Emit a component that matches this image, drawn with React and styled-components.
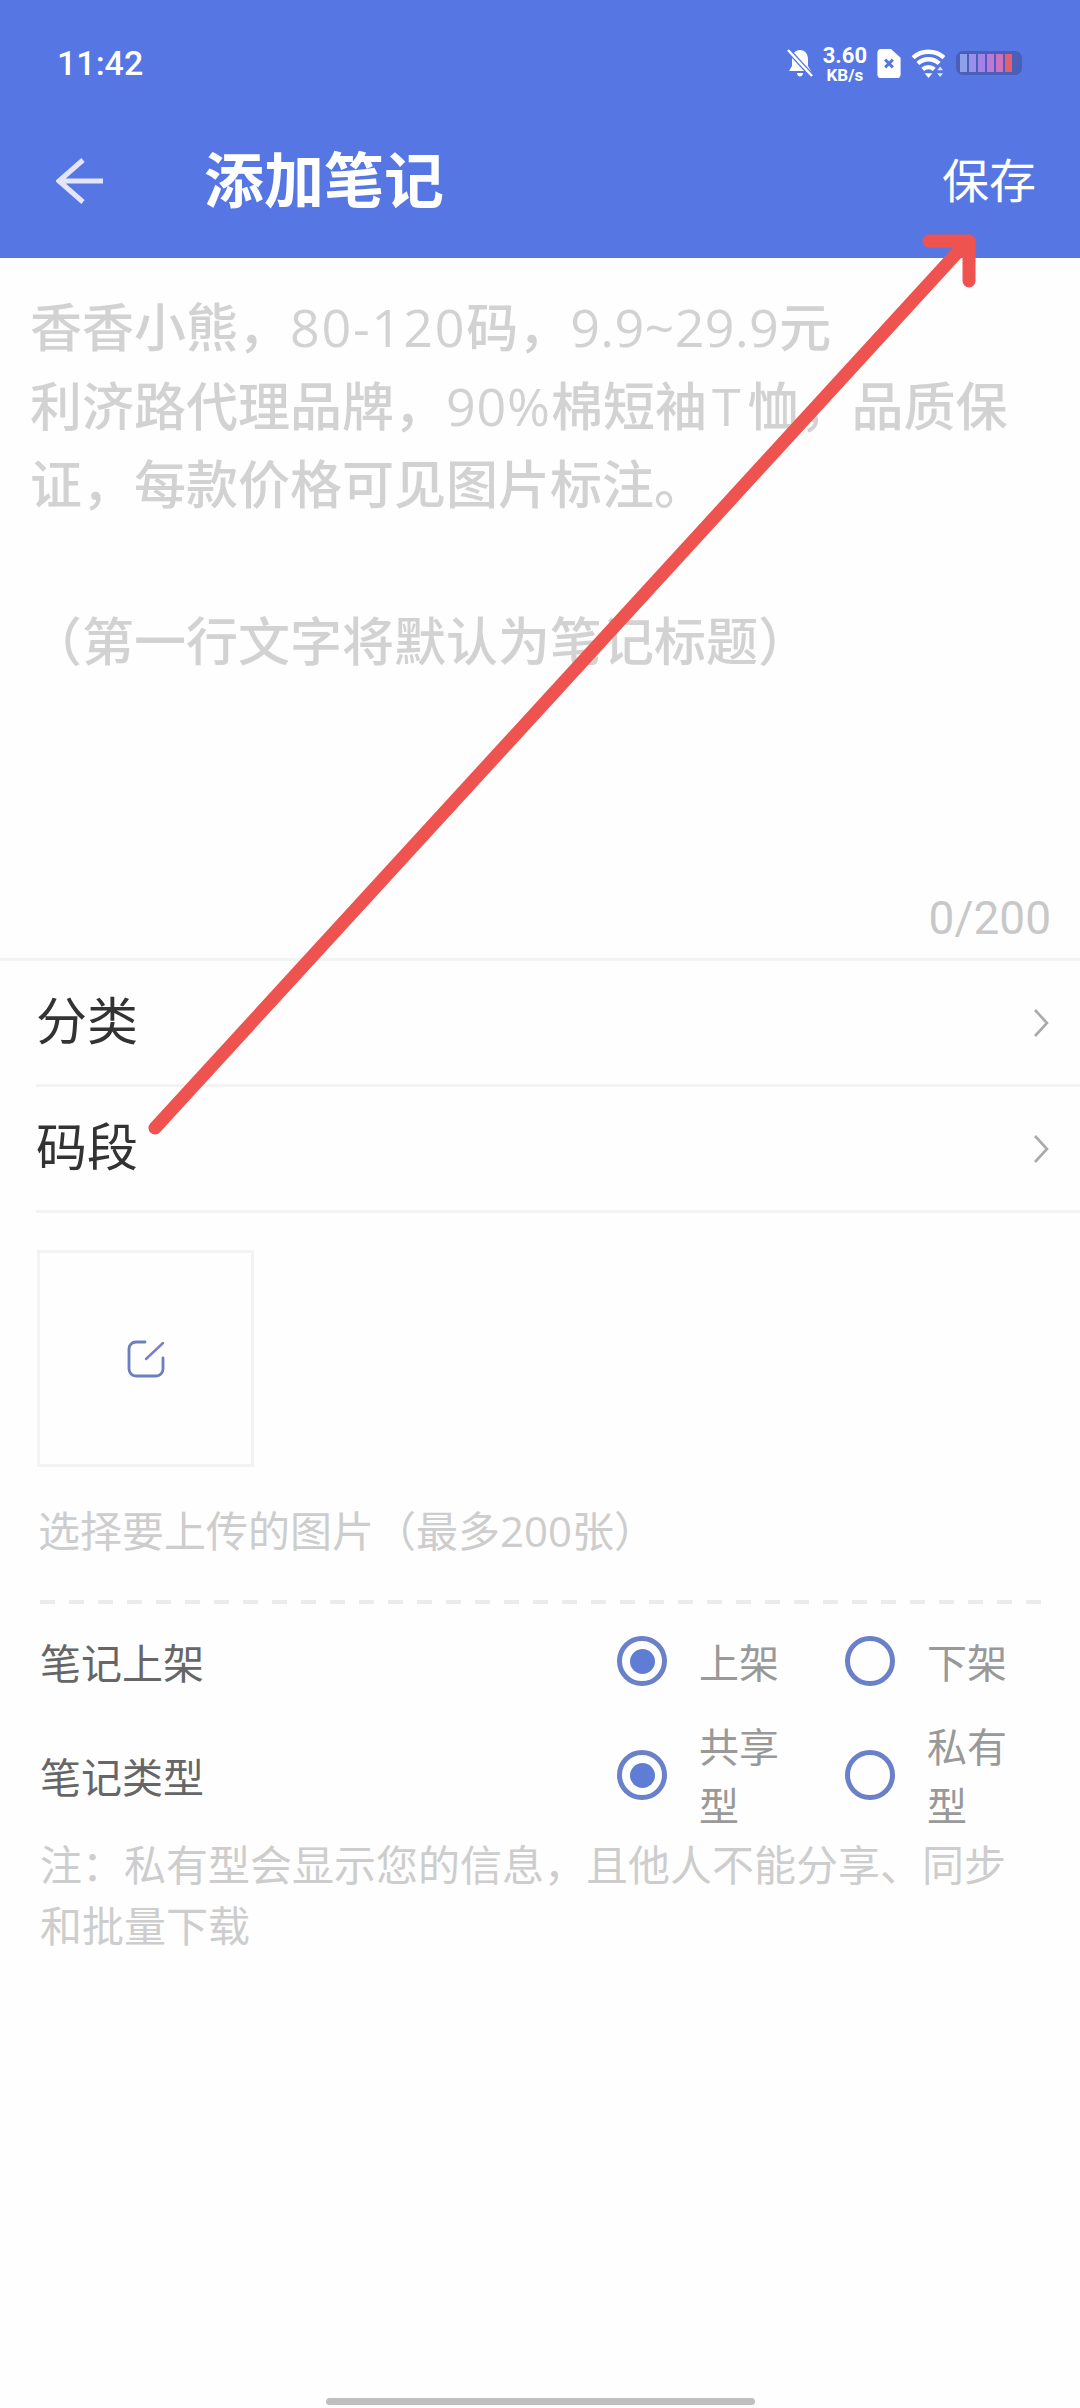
import React from 'react';
import styled, { createGlobalStyle } from 'styled-components';

const FONT = `"Noto Sans CJK SC", "Noto Sans", sans-serif`;
const TEXT_FONT = `"Open Sans", "Noto Sans CJK SC", sans-serif`;

const GlobalStyle = createGlobalStyle`
  html, body {
    margin: 0;
    padding: 0;
    background: #fefefe;
  }
  * {
    box-sizing: border-box;
  }
`;

const App = () => {
  return (
    <Page>
      <GlobalStyle />
      <Header>
        <StatusBar>
          <Time>11:42</Time>
          <StatusIcons>
            <svg width="26" height="30" viewBox="0 0 26 30">
              <path d="M13 2c-5 0-8 4-8 9v7l-3 5h22l-3-5v-7c0-5-3-9-8-9zM10 25c0 2 1.500 3.500 3 3.500s3-1.500 3-3.500z" fill="#fff" />
              <path d="M1 2l24 26" stroke="#5677e3" strokeWidth="5" />
              <path d="M1 2l24 26" stroke="#fff" strokeWidth="2.500" />
            </svg>
            <Speed>
              <SpeedValue>3.60</SpeedValue>
              <SpeedUnit>KB/s</SpeedUnit>
            </Speed>
            <svg width="24" height="29" viewBox="0 0 24 30">
              <path d="M4 0h10l10 9v17a4 4 0 0 1-4 4H4a4 4 0 0 1-4-4V4a4 4 0 0 1 4-4z" fill="#fff" />
              <path d="M8 11l8 8M16 11l-8 8" stroke="#5677e3" strokeWidth="3" />
            </svg>
            <svg width="35" height="29" viewBox="0 0 36 30">
              <path d="M2 9a24 24 0 0 1 32 0M7 15a16 16 0 0 1 22 0M12 21a9 9 0 0 1 12 0" stroke="#fff" strokeWidth="4.500" fill="none" />
              <path d="M14 25h8l-4 5z" fill="#fff" />
              <path d="M30 18l3 4h-6zM30 29l3-4h-6z" fill="#dfe6fb" />
            </svg>
            <Battery>
              {['#8f9fe8', '#9a8fec', '#a583e6', '#c078d8', '#d070c0', '#e4606f'].map((c) => (
                <BatteryCell key={c} $color={c} />
              ))}
            </Battery>
          </StatusIcons>
        </StatusBar>
        <TitleBar>
          <BackButton>
            <svg width="48" height="46" viewBox="0 0 48 46">
              <path d="M27 2L3 23l24 21M3 23h44" stroke="#e3e6f8" strokeWidth="5" fill="none" />
            </svg>
          </BackButton>
          <Title>添加笔记</Title>
          <SaveButton>保存</SaveButton>
        </TitleBar>
      </Header>

      <NoteArea>
        <Placeholder>
          香香小熊，<Latin $spacing="1.8px">80-120</Latin>码，<Latin $spacing="0.4px">9.9~29.9</Latin>元
          <br />
          利济路代理品牌，<Latin $spacing="0.8px">90%</Latin>棉短袖<Latin $lead="5px" $spacing="7px">T</Latin>恤，品质保
          <br />
          证，每款价格可见图片标注。
          <br />
          <br />
          （第一行文字将默认为笔记标题）
        </Placeholder>
        <Counter>0/200</Counter>
      </NoteArea>

      <MenuRow $first>
        <MenuLabel>分类</MenuLabel>
        <Chevron />
      </MenuRow>
      <MenuRow>
        <MenuLabel>码段</MenuLabel>
        <Chevron />
      </MenuRow>

      <UploadSection>
        <UploadBox>
          <svg width="38" height="38" viewBox="0 0 38 38" fill="none">
            <path d="M18 2H9a7 7 0 0 0-7 7v20a7 7 0 0 0 7 7h20a7 7 0 0 0 7-7v-11" stroke="#6a7fbd" strokeWidth="2.800" strokeLinecap="round" />
            <path d="M19 19L36 3" stroke="#7a80c8" strokeWidth="2.500" strokeLinecap="round" />
          </svg>
        </UploadBox>
        <Hint>选择要上传的图片（最多200张）</Hint>
      </UploadSection>

      <DashedLine />

      <OptionRow>
        <OptionLabel>笔记上架</OptionLabel>
        <RadioGroup>
          <Radio $checked />
          <RadioText>上架</RadioText>
        </RadioGroup>
        <RadioGroup>
          <Radio />
          <RadioText>下架</RadioText>
        </RadioGroup>
      </OptionRow>
      <OptionRow $tall>
        <OptionLabel>笔记类型</OptionLabel>
        <RadioGroup>
          <Radio $checked />
          <RadioText>共享型</RadioText>
        </RadioGroup>
        <RadioGroup>
          <Radio />
          <RadioText>私有型</RadioText>
        </RadioGroup>
      </OptionRow>
      <Note>注：私有型会显示您的信息，且他人不能分享、同步和批量下载</Note>

      <HomeBar />

      <ArrowMark width="1080" height="2408" viewBox="0 0 1080 2408" fill="none">
        <path d="M155 1128L966 243" stroke="#ef5350" strokeWidth="13" strokeLinecap="round" />
        <path d="M929 241L969 241L969 281" stroke="#ef5350" strokeWidth="13" strokeLinecap="round" strokeLinejoin="round" />
      </ArrowMark>
    </Page>
  );
};

export default App;

const Chevron = () => (
  <svg width="16" height="28" viewBox="0 0 16 28" fill="none">
    <path d="M2 1l12 13L2 27" stroke="#aaaaaa" strokeWidth="2.600" />
  </svg>
);

const Page = styled.div`
  position: relative;
  display: flex;
  flex-direction: column;
  width: 1080px;
  height: 2408px;
  overflow: hidden;
  background: #fefefe;
  font-family: ${FONT};
`;

const Header = styled.header`
  height: 258px;
  background: #5677e3;
  color: #fff;
`;

const StatusBar = styled.div`
  display: flex;
  align-items: center;
  justify-content: space-between;
  height: 126px;
  padding: 0 58px 0 57px;
`;

const Time = styled.span`
  font-family: Roboto, sans-serif;
  font-size: 34px;
  font-weight: 500;
`;

const StatusIcons = styled.div`
  display: flex;
  align-items: center;
  gap: 10px;
`;

const Speed = styled.div`
  display: flex;
  flex-direction: column;
  align-items: center;
  margin-top: 3px;
  font-family: Roboto, sans-serif;
  font-weight: 700;
  line-height: 1;
`;

const SpeedValue = styled.span`
  font-size: 22px;
`;

const SpeedUnit = styled.span`
  font-size: 17px;
`;

const Battery = styled.div`
  display: flex;
  align-items: center;
  gap: 2px;
  width: 66px;
  height: 24px;
  padding: 3px 4px;
  border-radius: 7px;
  background: #4a5fb8;
  filter: blur(0.7px);
`;

const BatteryCell = styled.span`
  width: 7px;
  height: 100%;
  background: ${(p) => p.$color};
`;

const TitleBar = styled.div`
  display: flex;
  align-items: center;
  height: 110px;
  padding: 0 44px 0 56px;
`;

const BackButton = styled.div`
  display: flex;
  width: 148px;
`;

const Title = styled.h1`
  flex: 1;
  margin: 0;
  padding-bottom: 8px;
  font-size: 60px;
  font-weight: 700;
  line-height: 1;
`;

const SaveButton = styled.span`
  padding-bottom: 8px;
  font-size: 47px;
  line-height: 1;
`;

const NoteArea = styled.div`
  display: flex;
  flex-direction: column;
  height: 700px;
  padding: 30px 29px 0 30px;
`;

const Placeholder = styled.div`
  flex: 1;
  font-family: ${TEXT_FONT};
  font-size: 52px;
  font-weight: 500;
  line-height: 78.500px;
  color: #d2d2d2;
`;

const Latin = styled.span`
  margin-left: ${(p) => p.$lead || 0};
  letter-spacing: ${(p) => p.$spacing};
`;

const Counter = styled.div`
  align-self: flex-end;
  height: 65px;
  font-family: Roboto, sans-serif;
  font-size: 46px;
  line-height: 50px;
  color: #c8c8c8;
`;

const MenuRow = styled.div`
  display: flex;
  align-items: center;
  justify-content: space-between;
  height: 126px;
  margin-left: ${(p) => (p.$first ? '0' : '36px')};
  padding: 0 31px 0 ${(p) => (p.$first ? '36px' : '0')};
  border-top: 3px solid #f3f3f3;
`;

const MenuLabel = styled.span`
  padding-bottom: 10px;
  font-size: 51px;
  color: #333;
`;

const UploadSection = styled.div`
  margin-left: 36px;
  padding: 37px 0 0 1px;
  border-top: 3px solid #f3f3f3;
`;

const UploadBox = styled.div`
  display: flex;
  align-items: center;
  justify-content: center;
  width: 217px;
  height: 217px;
  border: 3px solid #f3f3f3;
`;

const Hint = styled.div`
  margin: 33px 0 0 1px;
  font-family: ${TEXT_FONT};
  font-size: 42px;
  line-height: 62px;
  color: #cdcdcd;
`;

const DashedLine = styled.div`
  height: 4px;
  margin: 38px 38px 0 40px;
  background: repeating-linear-gradient(to right, #ebebeb 0 15px, transparent 15px 29px);
`;

const OptionRow = styled.div`
  display: flex;
  align-items: center;
  height: ${(p) => (p.$tall ? '118px' : '92px')};
  margin-top: ${(p) => (p.$tall ? '9px' : '11px')};
  padding-left: 40px;
`;

const OptionLabel = styled.span`
  width: 577px;
  font-size: 41px;
  color: #666;
`;

const RadioGroup = styled.div`
  display: flex;
  align-items: center;
  gap: 32px;
  width: 228px;
`;

const Radio = styled.span`
  display: flex;
  flex: none;
  align-items: center;
  justify-content: center;
  width: 50px;
  height: 50px;
  border: 5px solid #6a80c8;
  border-radius: 50%;

  &::after {
    content: '';
    display: ${(p) => (p.$checked ? 'block' : 'none')};
    width: 25px;
    height: 25px;
    border-radius: 50%;
    background: #5f7dd4;
  }
`;

const RadioText = styled.span`
  width: 86px;
  font-size: 40px;
  line-height: 59px;
  color: #999;
`;

const Note = styled.div`
  margin-top: -2px;
  padding: 0 40px;
  font-size: 42px;
  line-height: 61px;
  color: #cdcdcd;
`;

const HomeBar = styled.div`
  flex: none;
  width: 429px;
  height: 7px;
  margin: auto auto 3px;
  border-radius: 4px;
  background: #bfbfbf;
`;

const ArrowMark = styled.svg`
  position: absolute;
  top: 0;
  left: 0;
`;
